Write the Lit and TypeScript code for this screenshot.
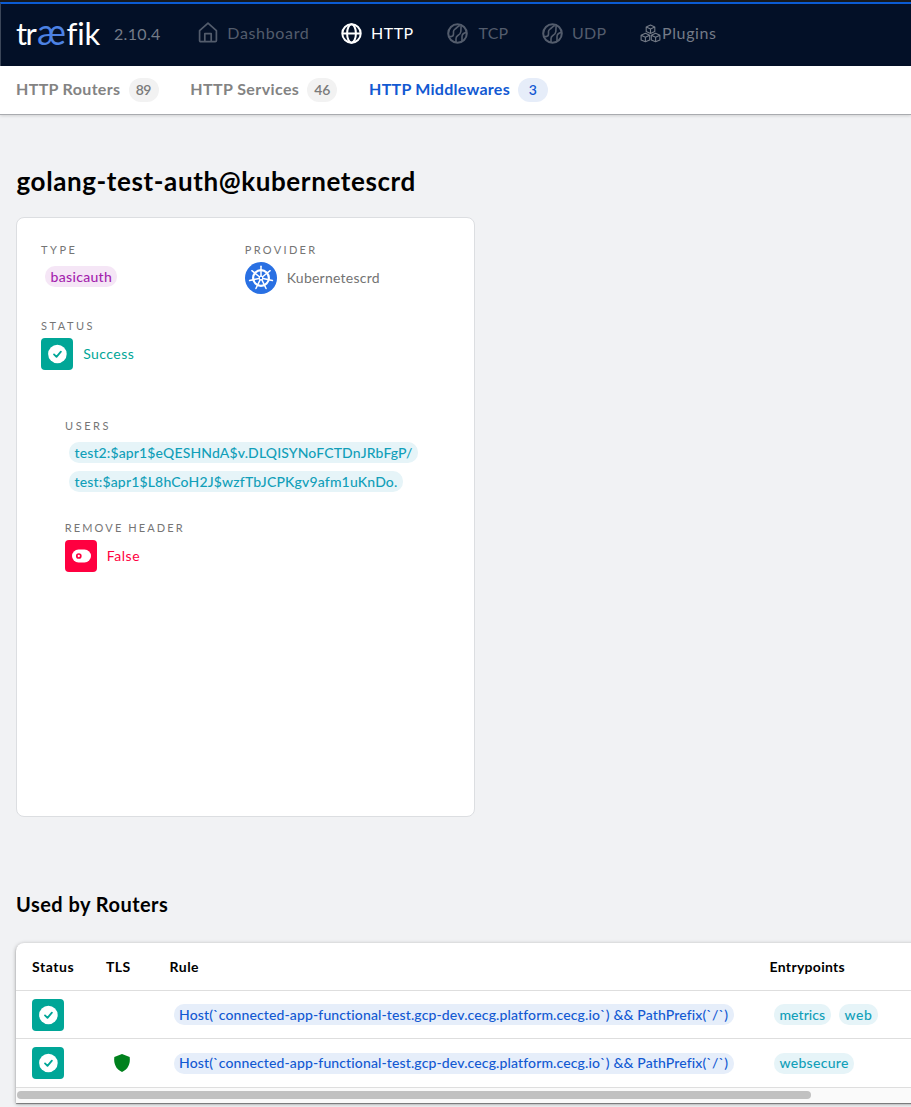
import { LitElement, html, css, svg } from "lit";
import { customElement, property } from "lit/decorators.js";

/** One line of text whose drawn width is fitted with letter spacing. */
@customElement("fit-text")
class FitText extends LitElement {
  @property() text = "";
  @property({ type: Number }) w = 0;
  static styles = css`
    :host { display: inline-block; white-space: pre; flex: none; font-variant-ligatures: none; }
  `;
  firstUpdated() {
    const cs = getComputedStyle(this);
    const ctx = document.createElement("canvas").getContext("2d")!;
    ctx.font = `${cs.fontWeight} ${cs.fontSize} ${cs.fontFamily}`;
    const m = ctx.measureText(this.text);
    const ink = m.actualBoundingBoxLeft + m.actualBoundingBoxRight;
    const n = Math.max(1, this.text.length - 1);
    this.style.width = this.w + "px";
    if (this.text.length > 1) this.style.letterSpacing = (this.w - ink) / n + "px";
    this.style.textIndent = m.actualBoundingBoxLeft + "px";
  }
  render() { return html`${this.text}`; }
}

const t = (text: string, w: number, cls = "") => html`<fit-text class=${cls} .text=${text} .w=${w}></fit-text>`;

const home = html`<svg width="20" height="22" viewBox="0 0 20 22" fill="none" stroke="currentColor" stroke-width="1.7" stroke-linejoin="round">
  <path d="M1.6 8.700 10 1.200l8.400 7.500v9.800c0 .8-.4 1.200-1.200 1.200H2.800c-.8 0-1.200-.4-1.200-1.200z"/><path d="M6.800 19.700v-8h6.400v8"/></svg>`;
const globe = html`<svg width="21" height="21" viewBox="0 0 21 21" fill="none" stroke="currentColor" stroke-width="2">
  <circle cx="10.500" cy="10.500" r="9.200"/><ellipse cx="10.500" cy="10.500" rx="4.400" ry="9.200"/><path d="M1.300 10.500h18.400"/></svg>`;
const ball = html`<svg width="21" height="21" viewBox="0 0 21 21" fill="none" stroke="currentColor" stroke-width="2">
  <circle cx="10.500" cy="10.500" r="9.300"/><path stroke-width="1.600" d="M1.500 13.600H4c1.700 0 2.500-1 2.500-2.500V8.500c0-1 .5-1.700 1.500-2.400C9.800 4.900 10.700 3.400 12.800 2.600M9 19.500v-3.700c0-1.500.4-2.300 1.600-3 1.800-1 3.100-2.200 3.200-4 .1-2.100.3-4.300.3-6.300M15 18.300v-4.500c0-2.300 1.900-3.900 4.500-4.400"/></svg>`;
const cube = (x: number, y: number) => svg`<g transform="translate(${x} ${y})"><path d="M4.700.5 9 2.400v4.700L4.700 9 .4 7.100V2.400zM.4 2.400l4.300 2 4.300-2M4.700 4.400V9"/></g>`;
const cubes = html`<svg width="21" height="20" viewBox="0 0 21 20" fill="none" stroke="currentColor" stroke-width="1.100" stroke-linejoin="round">
  ${cube(5.8, 1.5)}${cube(0.7, 9.8)}${cube(10.9, 9.8)}</svg>`;
const helm = html`<svg width="32" height="32" viewBox="-16 -16 32 32"><circle r="16" fill="#2970e3"/>
  <g fill="none" stroke="#fff"><circle r="7.900" stroke-width="2.200"/><circle r="1.800" stroke-width="1.200"/>
  ${[0, 1, 2, 3, 4, 5, 6].map((i) => svg`<path stroke-width="1.500" stroke-linecap="round" d="M0-2V-11.700" transform="rotate(${(i * 360) / 7})"/>`)}</g></svg>`;
const check = html`<svg width="32" height="32" viewBox="0 0 32 32"><rect width="32" height="32" rx="4" fill="#00a697"/>
  <circle cx="16.400" cy="16" r="9.300" fill="#fff"/><path d="m13 16.400 2.500 2.500 4.400-5.300" fill="none" stroke="#00a697" stroke-width="1.800" stroke-linecap="round" stroke-linejoin="round"/></svg>`;
const toggle = html`<svg width="32" height="32" viewBox="0 0 32 32"><rect width="32" height="32" rx="4" fill="#ff0040"/>
  <rect x="7" y="9.500" width="19" height="13" rx="6.500" fill="#fff"/><circle cx="13.800" cy="16" r="2" fill="none" stroke="#ff0040" stroke-width="1.700"/></svg>`;
const shield = html`<svg width="18" height="20" viewBox="0 0 18 20"><path d="M9 1 16.700 4c.8 7-1.700 12.300-7.700 15C3 16.300.5 11 1.300 4z" fill="#00811d"/></svg>`;

@customElement("app-root")
class AppRoot extends LitElement {
  static styles = css`
    :host { display: block; height: 1107px; overflow: hidden; background: #f1f2f4; color: #000;
      font-family: Lato, "Open Sans", sans-serif; }
    * { box-sizing: border-box; }
    svg { display: block; flex: none; }
    .top { height: 66px; border-top: 2px solid #17181c; background: #031027; color: #535c6c; }
    .bar { height: 64px; border-top: 2px solid #0b5bd3; border-left: 1px solid #3c4759; display: flex; align-items: center;
      padding: 0 0 4px 15px; font-size: 16px; line-height: 24px; }
    .logo { display: flex; align-items: baseline; font-size: 31px; line-height: 40px; color: #fff; margin: -2px 14px 0 0; }
    .logo .ae { color: #4c82e4; margin: 0 0 0 0.5px; font-size: 36px; }
    .ver { color: #747b87; margin: 1px 38px 0 0; }
    .item { display: flex; align-items: center; }
    .item svg { margin-right: 10px; }
    .item.plug { color: #747b87; }
    .item.plug svg { margin-right: 2px; }
    .on { color: #fff; }
    .item fit-text { margin-left: 0.3px; }
    .g0 { margin-left: 33px; } .g1 { margin-left: 33.2px; } .g2 { margin-left: 33.7px; }
    .tabs { height: 49px; border-bottom: 1px solid #a9abaf; box-shadow: 0 1px 3px #0002; background: #fff; display: flex; align-items: center;
      padding-left: 17px; color: #838383; font-size: 16px; font-weight: 700; line-height: 24px; }
    .tabs > fit-text { height: 25px; line-height: 22px; }
    .badge { height: 24px; width: 30px; border-radius: 12px; background: #f2f2f2; color: #7b7b7b; font-size: 14px; font-weight: 600;
      display: flex; justify-content: center; margin: 0 32.800px 0 8px; }
    .act { color: #1259d2; } .badge.act { background: #e6edf9; margin-left: 7.7px; }
    main { padding-left: 16px; }
    h1 { margin: 48px 0 0 0.5px; font-size: 26px; font-weight: 700; line-height: 36px; height: 54px; }
    .card { width: 459px; height: 600px; background: #fff; border: 1px solid #dcdee1; border-radius: 8px; padding: 25px 24px; }
    .row { display: flex; height: 76px; } .row .cell { width: 204px; }
    .lbl { font-size: 11px; line-height: 14px; height: 19px; color: #757575; }
    .lbl.in { padding-left: 0.8px; }
    .val { display: flex; align-items: center; font-size: 14px; line-height: 21px; color: #737373; height: 32px; }
    .val fit-text { margin: -2px 0 0 10.7px; }
    .val.green fit-text { color: #00a697; margin-left: 10.2px; } .red fit-text { color: #ff0040; }
    .inner { padding: 24px 24px; }
    .users { height: 102px; }
    .pill { display: flex; width: max-content; height: 21px; line-height: 21px; border-radius: 10px; padding: 0 6px 0 5.5px;
      font-size: 14px; font-weight: 500; background: #e6f4f8; color: #119fb9; margin-left: 4px; }
    .users .pill { margin-bottom: 8px; }
    .users .lbl { height: 23px; }
    .purple { background: #f5e6f6; color: #a41fae; margin-top: 4px; }
    .blue { background: #e6eefa; color: #1259d2; padding-left: 6px; padding-right: 5.5px; }
    h2 { margin: 73px 0 0 1px; font-size: 20px; font-weight: 700; line-height: 28px; height: 53px; }
    .table { height: 160px; width: 920px; background: #fff; border-radius: 8px 0 0 0; box-shadow: 0 1px 4px #0005, 0 1px 1px #0006; }
    .tr { display: grid; grid-template-columns: 74px 64px 600px 1fr; align-items: center; height: 48px; padding-left: 16px;
      border-bottom: 1px solid #dedede; font-size: 14px; }
    .tr.last { height: 49px; }
    .tr.last .pill { line-height: 20px; }
    .th { font-weight: 700; }
    .th .sh { margin-left: 0.6px; }
    .tls { padding-left: 7px; }
    .pills { display: flex; gap: 4px; }
    .track { height: 15px; background: #fafafa; padding: 3px 1px; }
    .thumb { width: 794px; height: 8px; border-radius: 4px; background: #c1c1c1; }
  `;
  row(tls: boolean, eps: [string, number][]) {
    return html`<div class="tr ${tls ? "last" : ""}">${check}<div class="tls">${tls ? shield : ""}</div>
      <div class="pill blue">${t("Host(`connected-app-functional-test.gcp-dev.cecg.platform.cecg.io`) && PathPrefix(`/`)", 548)}</div>
      <div class="pills">${eps.map((e) => html`<div class="pill">${t(e[0], e[1])}</div>`)}</div></div>`;
  }
  render() {
    return html`
      <header class="top"><nav class="bar">
        <div class="logo">${t("tr", 21.5)}${t("æ", 28.5, "ae")}${t("fik", 33.5)}</div>
        ${t("2.10.4", 46, "ver")}
        <div class="item">${home}${t("Dashboard", 79.5)}</div>
        <div class="item on g0">${globe}${t("HTTP", 41.5)}</div>
        <div class="item g2">${ball}${t("TCP", 30)}</div>
        <div class="item g1">${ball}${t("UDP", 33.5)}</div>
        <div class="item plug g1">${cubes}${t("Plugins", 53)}</div>
      </nav></header>
      <nav class="tabs">
        ${t("HTTP Routers", 103.5)}<span class="badge">${t("89", 15.5)}</span>
        ${t("HTTP Services", 108)}<span class="badge">${t("46", 16)}</span>
        ${t("HTTP Middlewares", 140, "act")}<span class="badge act">${t("3", 8)}</span>
      </nav>
      <main>
        <h1>${t("golang-test-auth@kubernetescrd", 398)}</h1>
        <section class="card">
          <div class="row">
            <div class="cell"><div class="lbl">${t("TYPE", 33.5)}</div><div class="pill purple">${t("basicauth", 60.5)}</div></div>
            <div class="cell"><div class="lbl in">${t("PROVIDER", 69.5)}</div><div class="val">${helm}${t("Kubernetescrd", 91)}</div></div>
          </div>
          <div class="row"><div class="cell"><div class="lbl">${t("STATUS", 51.5)}</div><div class="val green">${check}${t("Success", 50.5)}</div></div></div>
          <div class="inner">
            <div class="users"><div class="lbl">${t("USERS", 43.5)}</div>
              <div class="pill">${t("test2:$apr1$eQESHNdA$v.DLQISYNoFCTDnJRbFgP/", 337.5)}</div>
              <div class="pill">${t("test:$apr1$L8hCoH2J$wzfTbJCPKgv9afm1uKnDo.", 322.5)}</div></div>
            <div class="lbl in">${t("REMOVE HEADER", 117)}</div><div class="val red">${toggle}${t("False", 31.5)}</div>
          </div>
        </section>
        <h2>${t("Used by Routers", 151.5)}</h2>
        <section class="table">
          <div class="tr th">${t("Status", 41.5)}${t("TLS", 24.5)}${t("Rule", 28.5, "sh")}${t("Entrypoints", 74, "sh")}</div>
          ${this.row(false, [["metrics", 45.5], ["web", 27.5]])}
          ${this.row(true, [["websecure", 68.5]])}
          <div class="track"><div class="thumb"></div></div>
        </section>
      </main>`;
  }
}
